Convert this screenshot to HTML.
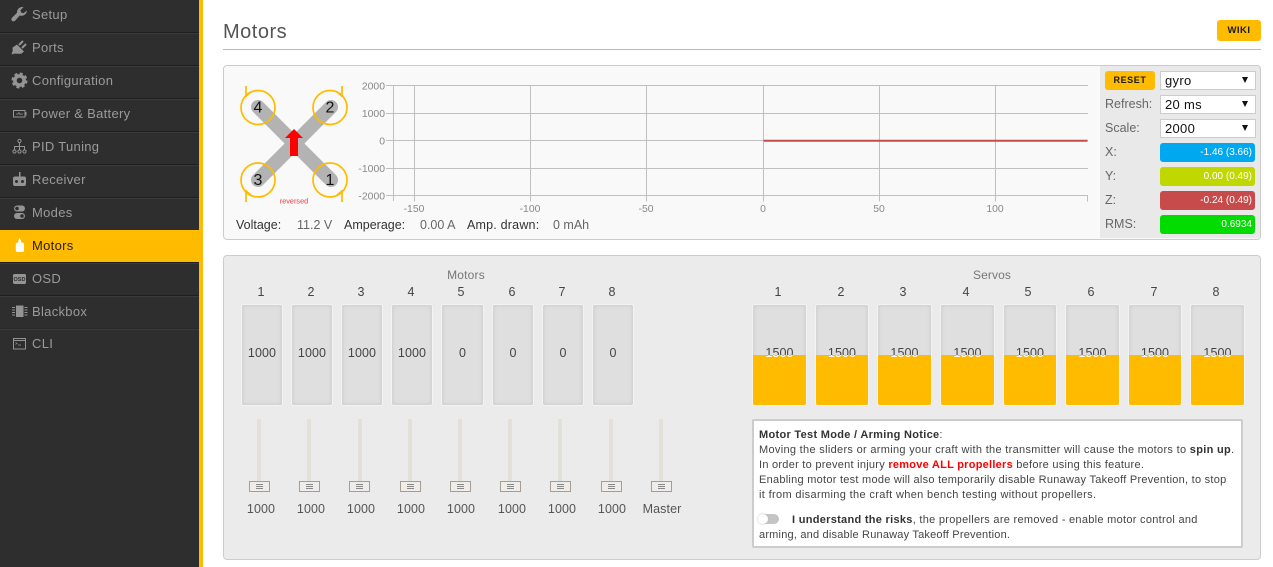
<!DOCTYPE html>
<html><head><meta charset="utf-8"><title>Motors</title>
<style>
html,body{margin:0;padding:0;width:1273px;height:567px;overflow:hidden;background:#fff;font-family:"Liberation Sans",Arial,sans-serif}
.a{position:absolute}
.t{position:absolute;white-space:nowrap;line-height:16px;height:16px}
.c{text-align:center}
#side{left:0;top:0;width:199px;height:567px;background:#2e2e2e}
#yb{left:199px;top:0;width:4px;height:567px;background:#ffbb00}
.r{position:absolute;left:0;width:199px;height:1px;background:#1f1f1f;box-shadow:0 1px 0 #3b3b3b}
.n{position:absolute;left:32px;color:#9b9b9b;font-size:13px;letter-spacing:.3px;line-height:16px;white-space:nowrap}
.sel{position:absolute;left:1160px;width:90px;height:15px;border:1px solid #ccc;padding:1px 0 1px 4px;background:#fff;font-size:13px;line-height:15px;color:#111;letter-spacing:.3px}
.sel:after{content:"";position:absolute;left:81px;top:5px;border:3px solid transparent;border-width:6px 3px 0;border-top-color:#111}
.l{position:absolute;left:1105px;color:#666;font-size:12.5px;letter-spacing:0;line-height:16px}
.b{position:absolute;left:1160px;width:95px;height:19px;border-radius:3px;color:#fff;font-size:10px;font-weight:400;line-height:19px;text-align:right;box-sizing:border-box;padding-right:3px}
.m{position:absolute;top:305px;height:100px;background:#dfdfdf;border-radius:2px;box-shadow:inset 0 0 4px #c6c6c6,0 0 0 1px #f3f3f3;font-size:12.5px;color:#444;text-align:center;line-height:96px;overflow:hidden;letter-spacing:.1px}
.m i{position:absolute;left:0;right:0;top:50px;bottom:0;background:#ffbb00;overflow:hidden;font-style:normal;color:#fff;line-height:96px}
.m i b{position:absolute;left:0;right:0;top:-50px;font-weight:400}
.num{position:absolute;top:284px;width:40px;text-align:center;font-size:12.5px;color:#444;line-height:16px}
.tr{position:absolute;top:419px;width:4px;height:62px;background:#e3dfd9}
.h{position:absolute;top:481px;width:19px;height:9px;border:1px solid #a59d94;background:#efecea}
.h:after{content:"";position:absolute;left:6px;top:2px;width:7px;height:1px;background:#888;box-shadow:0 2px 0 #888,0 4px 0 #888}
.v{position:absolute;top:501px;width:50px;text-align:center;font-size:12.5px;color:#555;line-height:16px;letter-spacing:.1px}
.p{position:absolute;left:759px;font-size:11px;line-height:15px;color:#444;white-space:nowrap;letter-spacing:.26px}
.p b{color:#333}
</style></head>
<body>
<div class="a" id="side"></div><div class="a" id="yb"></div>
<div class="r" style="top:32px"></div><div class="r" style="top:65px"></div><div class="r" style="top:98px"></div><div class="r" style="top:131px"></div><div class="r" style="top:164px"></div><div class="r" style="top:197px"></div>
<div class="a" style="left:0;top:230px;width:199px;height:32px;background:#ffbb00"></div>
<div class="r" style="top:262px"></div><div class="r" style="top:295px"></div><div class="r" style="top:328px;background:#282828"></div>

<svg class="a" style="left:0;top:0" width="32" height="360" fill="#949494">
<path d="M27 10.5a5.5 5.5 0 0 1-7.2 5L15 20.8a2.1 2.1 0 0 1-3-3l5-5A5.5 5.5 0 0 1 23.6 7l-3.2 3.2.7 2.3 2.3.7z"/>
<path d="M17 44.5l7 7-2.8 2.2h-4l-2.8-.2-1.8 1-1-1 1-2v-4z"/><path d="M19 45l4-4M22 48l4-4" stroke="#949494" stroke-width="2" />
<circle cx="19.5" cy="80.5" r="4.6" fill="none" stroke="#949494" stroke-width="3.6"/><circle cx="19.5" cy="80.5" r="6.8" fill="none" stroke="#949494" stroke-width="2.4" stroke-dasharray="3 2.34"/>
<rect x="13.5" y="110.5" width="11.5" height="6.5" fill="none" stroke="#949494" stroke-width="1"/><rect x="25" y="112" width="1.5" height="3.5"/><path d="M16 114h2l1-1.5 1 2 1-.5h2" fill="none" stroke="#949494" stroke-width=".7"/>
<g fill="none" stroke="#949494"><circle cx="19.5" cy="141" r="1.6"/><circle cx="14.5" cy="151.5" r="1.6"/><circle cx="19.5" cy="151.5" r="1.6"/><circle cx="24.5" cy="151.5" r="1.6"/><path d="M19.5 142.5V150M14.5 150v-3.5h10V150"/></g>
<rect x="13" y="176.5" width="13" height="9.5" rx="2"/><rect x="19" y="172" width="1.5" height="5"/><circle cx="16.5" cy="181.5" r="1.5" fill="#2e2e2e"/><circle cx="22.5" cy="181.5" r="1.5" fill="#2e2e2e"/>
<rect x="14" y="205.5" width="11" height="6" rx="3"/><rect x="14" y="213" width="11" height="6" rx="3"/><circle cx="17" cy="208.5" r="1.8" fill="#2e2e2e"/><circle cx="22" cy="216" r="1.8" fill="#2e2e2e"/>
<path fill="#fff" d="M19.5 238c1 1.2 1.8 2.5 1.8 4.6h1.3a1.5 1.5 0 0 1 1.4 1.5v6.4a1.5 1.5 0 0 1-1.5 1.5h-5.2a1.5 1.5 0 0 1-1.5-1.5v-6.4a1.5 1.5 0 0 1 1.4-1.5h1c0-2.1.8-3.4 1.3-4.6z"/>
<rect x="13" y="274" width="13" height="10" rx="1.5"/><text x="19.5" y="281.2" font-size="5.5" font-weight="bold" text-anchor="middle" fill="#2e2e2e" font-family="Liberation Sans">OSD</text>
<rect x="16" y="305.5" width="7.5" height="11.5" rx=".5"/><path d="M12 307.5h3M12 310h3M12 312.5h3M12 315h3M24.5 307.5h3M24.5 310h3M24.5 312.5h3M24.5 315h3" stroke="#949494" stroke-width="1"/>
<rect x="13.5" y="338.5" width="12" height="10.5" fill="none" stroke="#949494"/><path d="M13.5 340.5h12" stroke="#949494"/><path d="M15.5 342.5l1.5 1-1.500 1M18 345h3" fill="none" stroke="#949494" stroke-width=".7"/>
</svg>

<div class="n" style="top:7px">Setup</div>
<div class="n" style="top:40px">Ports</div>
<div class="n" style="top:73px">Configuration</div>
<div class="n" style="top:106px">Power &amp; Battery</div>
<div class="n" style="top:139px">PID Tuning</div>
<div class="n" style="top:172px">Receiver</div>
<div class="n" style="top:205px">Modes</div>
<div class="n" style="top:238px;color:#2a2208">Motors</div>
<div class="n" style="top:271px">OSD</div>
<div class="n" style="top:304px">Blackbox</div>
<div class="n" style="top:336px">CLI</div>

<div class="t" style="left:223px;top:21px;height:22px;line-height:22px;font-size:20px;color:#555;letter-spacing:.5px">Motors</div>
<div class="a" style="left:223px;top:49px;width:1038px;height:1px;background:#e8b838"></div>
<div class="a" style="left:1217px;top:20px;width:44px;height:21px;background:#ffbb00;border-radius:3px;font-size:9.5px;font-weight:bold;text-align:center;line-height:21px;color:#1a1a1a;letter-spacing:.5px">WIKI</div>

<div class="a" style="left:223px;top:65px;width:1036px;height:173px;background:#f9f9f9;border:1px solid #ccc;border-radius:4px"></div>
<div class="a" style="left:1100px;top:66px;width:160px;height:172px;background:#e9e9e9;border-radius:0 3px 3px 0"></div>

<svg class="a" style="left:0;top:0" width="1100" height="240">
<g stroke="#c0c0c0" stroke-width="1" fill="none">
<path d="M393.5 85v116M414.5 85.5v116M530.5 85.5v116M646.5 85.5v116M763.5 85.5v116M879.5 85.5v116M995.5 85.5v116M1087.5 195.5v6"/>
<path d="M386 85.5h702M386 113.5h702M386 140.5h702M386 168.5h702M386 195.5h702"/>
</g>
<path d="M763.5 140.8H1087.5" stroke="#c84b4b" stroke-width="2"/>
<g font-family="Liberation Sans" font-size="10.4" fill="#888" text-anchor="end">
<text x="385" y="89.5">2000</text><text x="385" y="117">1000</text><text x="385" y="144.5">0</text><text x="385" y="172">-1000</text><text x="385" y="199.5">-2000</text>
</g>
<g font-family="Liberation Sans" font-size="10.4" fill="#888" text-anchor="middle">
<text x="414" y="212">-150</text><text x="530" y="212">-100</text><text x="646" y="212">-50</text><text x="763" y="212">0</text><text x="879" y="212">50</text><text x="995" y="212">100</text>
</g>
<g stroke="#b3b3b3" stroke-width="14" stroke-linecap="round"><path d="M258 107L331 180M331 107L258 180"/></g>
<g fill="none" stroke="#ffbb00" stroke-width="1.7">
<circle cx="258" cy="107.5" r="17"/><circle cx="330" cy="107.5" r="17"/><circle cx="258" cy="180" r="17"/><circle cx="330" cy="180" r="17"/>
<path d="M246 86V97M342 86V97M246 190V202M342 190V202"/>
<path d="M246 96l5-4M342 96l-5-4M246 191l5 4M342 191l-5 4"/>
</g>
<path d="M294 129L303 138H298V156H290V138H285z" fill="#f00"/>
<g font-family="Liberation Sans" font-size="16" fill="#111" text-anchor="middle">
<text x="258" y="112.5">4</text><text x="330" y="112.5">2</text><text x="258" y="185">3</text><text x="330" y="185">1</text>
</g>
<text x="294" y="203.5" font-family="Liberation Sans" font-size="7.3" fill="#f33" text-anchor="middle">reversed</text>
</svg>

<div class="t" style="left:236px;top:217px;font-size:12.5px;color:#333">Voltage:</div>
<div class="t" style="left:297px;top:217px;font-size:12.5px;color:#666">11.2 V</div>
<div class="t" style="left:344px;top:217px;font-size:12.5px;color:#333">Amperage:</div>
<div class="t" style="left:420px;top:217px;font-size:12.5px;color:#666">0.00 A</div>
<div class="t" style="left:467px;top:217px;font-size:12.5px;color:#333;letter-spacing:.2px">Amp. drawn:</div>
<div class="t" style="left:553px;top:217px;font-size:12.5px;color:#666">0 mAh</div>

<div class="a" style="left:1105px;top:71px;width:50px;height:19px;background:#ffbb00;border-radius:3px;font-size:9px;font-weight:bold;text-align:center;line-height:19px;color:#1a1a1a;letter-spacing:.6px">RESET</div>
<div class="sel" style="top:71px">gyro</div>
<div class="sel" style="top:95px">20 ms</div>
<div class="sel" style="top:119px">2000</div>
<div class="l" style="top:96px">Refresh:</div>
<div class="l" style="top:120px">Scale:</div>
<div class="l" style="top:144px">X:</div>
<div class="l" style="top:168px">Y:</div>
<div class="l" style="top:192px">Z:</div>
<div class="l" style="top:216px">RMS:</div>
<div class="b" style="top:143px;background:#00a8f0">-1.46 (3.66)</div>
<div class="b" style="top:167px;background:#c0d800">0.00 (0.49)</div>
<div class="b" style="top:191px;background:#c84b4b">-0.24 (0.49)</div>
<div class="b" style="top:215px;background:#00dc00">0.6934</div>

<div class="a" style="left:223px;top:255px;width:1036px;height:303px;background:#ebebeb;border:1px solid #ccc;border-radius:4px"></div>

<div class="t c" style="left:416px;width:100px;top:267px;font-size:12px;color:#777;letter-spacing:.2px">Motors</div>
<div class="t c" style="left:942px;width:100px;top:267px;font-size:12px;color:#777;letter-spacing:.1px">Servos</div>

<div class="num" style="left:241px">1</div><div class="num" style="left:291px">2</div><div class="num" style="left:341px">3</div><div class="num" style="left:391px">4</div><div class="num" style="left:441px">5</div><div class="num" style="left:492px">6</div><div class="num" style="left:542px">7</div><div class="num" style="left:592px">8</div>
<div class="m" style="left:242px;width:40px">1000</div>
<div class="m" style="left:292px;width:40px">1000</div>
<div class="m" style="left:342px;width:40px">1000</div>
<div class="m" style="left:392px;width:40px">1000</div>
<div class="m" style="left:442px;width:41px">0</div>
<div class="m" style="left:493px;width:40px">0</div>
<div class="m" style="left:543px;width:40px">0</div>
<div class="m" style="left:593px;width:40px">0</div>

<div class="tr" style="left:257px"></div><div class="h" style="left:249px"></div><div class="v" style="left:236px">1000</div>
<div class="tr" style="left:307px"></div><div class="h" style="left:299px"></div><div class="v" style="left:286px">1000</div>
<div class="tr" style="left:358px"></div><div class="h" style="left:349px"></div><div class="v" style="left:336px">1000</div>
<div class="tr" style="left:408px"></div><div class="h" style="left:400px"></div><div class="v" style="left:386px">1000</div>
<div class="tr" style="left:458px"></div><div class="h" style="left:450px"></div><div class="v" style="left:436px">1000</div>
<div class="tr" style="left:508px"></div><div class="h" style="left:500px"></div><div class="v" style="left:487px">1000</div>
<div class="tr" style="left:558px"></div><div class="h" style="left:550px"></div><div class="v" style="left:537px">1000</div>
<div class="tr" style="left:609px"></div><div class="h" style="left:601px"></div><div class="v" style="left:587px">1000</div>
<div class="tr" style="left:659px"></div><div class="h" style="left:651px"></div><div class="v" style="left:637px">Master</div>

<div class="num" style="left:758px">1</div><div class="num" style="left:821px">2</div><div class="num" style="left:883px">3</div><div class="num" style="left:946px">4</div><div class="num" style="left:1008px">5</div><div class="num" style="left:1071px">6</div><div class="num" style="left:1134px">7</div><div class="num" style="left:1196px">8</div>
<div class="m" style="left:753px;width:53px">1500<i><b>1500</b></i></div>
<div class="m" style="left:816px;width:52px">1500<i><b>1500</b></i></div>
<div class="m" style="left:878px;width:53px">1500<i><b>1500</b></i></div>
<div class="m" style="left:941px;width:53px">1500<i><b>1500</b></i></div>
<div class="m" style="left:1004px;width:52px">1500<i><b>1500</b></i></div>
<div class="m" style="left:1066px;width:53px">1500<i><b>1500</b></i></div>
<div class="m" style="left:1129px;width:52px">1500<i><b>1500</b></i></div>
<div class="m" style="left:1191px;width:53px">1500<i><b>1500</b></i></div>

<div class="a" style="left:752px;top:419px;width:487px;height:125px;background:#fff;border:2px solid #ccc;border-radius:2px"></div>
<div class="p" style="top:428px;letter-spacing:.3px"><b>Motor Test Mode / Arming Notice</b>:</div>
<div class="p" style="top:443px;letter-spacing:.31px">Moving the sliders or arming your craft with the transmitter will cause the motors to <b>spin up</b>.</div>
<div class="p" style="top:458px">In order to prevent injury <b style="color:#f00">remove ALL propellers</b> before using this feature.</div>
<div class="p" style="top:473px">Enabling motor test mode will also temporarily disable Runaway Takeoff Prevention, to stop</div>
<div class="p" style="top:488px;letter-spacing:.35px">it from disarming the craft when bench testing without propellers.</div>
<div class="a" style="left:759px;top:514px;width:20px;height:10px;border-radius:5px;background:#c4c4c4"></div>
<div class="a" style="left:758px;top:514px;width:10px;height:10px;border-radius:5px;background:#fff;box-shadow:0 0 2px #bbb"></div>
<div class="p" style="top:513px;left:792px;letter-spacing:.29px"><b>I understand the risks</b>, the propellers are removed - enable motor control and</div>
<div class="p" style="top:528px;letter-spacing:.2px">arming, and disable Runaway Takeoff Prevention.</div>
</body></html>
